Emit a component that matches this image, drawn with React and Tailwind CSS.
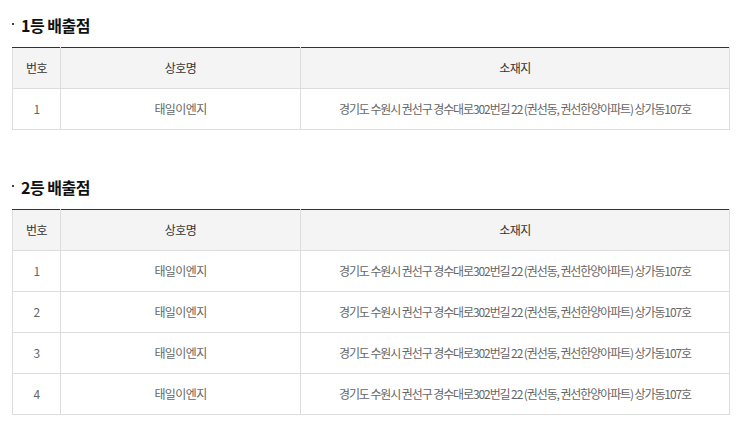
const rows1 = [1]
const rows2 = [1, 2, 3, 4]
const addr = '경기도 수원시 권선구 경수대로302번길 22 (권선동, 권선한양아파트) 상가동107호'

function StoreTable({ title, rows }) {
  return (
    <section>
      <h3 className="flex items-center gap-[7px] h-[26px] text-[16px] font-bold text-[#111] tracking-[-0.5px]">
        <span className="w-[2px] h-[2px] -mt-[2px] bg-[#444]" />
        {title}
      </h3>
      <table className="mt-[9px] w-full border-collapse table-fixed text-[12px] tracking-[-0.6px]">
        <colgroup>
          <col className="w-[48px]" />
          <col className="w-[240px]" />
          <col />
        </colgroup>
        <thead>
          <tr className="h-[41px] bg-[#f4f4f4] text-[#333]">
            <th className="p-0 font-normal border border-[#ddd] border-t-[#333]">번호</th>
            <th className="p-0 font-normal border border-[#ddd] border-t-[#333]">상호명</th>
            <th className="p-0 font-normal border border-[#ddd] border-t-[#333]">소재지</th>
          </tr>
        </thead>
        <tbody className="text-[#666]">
          {rows.map((n) => (
            <tr key={n} className="h-[41px]">
              <td className="p-0 text-center border border-[#ddd]">{n}</td>
              <td className="p-0 text-center border border-[#ddd]">태일이엔지</td>
              <td className="p-0 text-center border border-[#ddd] tracking-[-1.1px]">{addr}</td>
            </tr>
          ))}
        </tbody>
      </table>
    </section>
  )
}

export default function App() {
  return (
    <div className="w-[742px] h-[423px] bg-white px-[12px] pt-[12px] font-['Noto_Sans_CJK_KR',sans-serif] flex flex-col gap-[44px] overflow-hidden">
      <StoreTable title="1등 배출점" rows={rows1} />
      <StoreTable title="2등 배출점" rows={rows2} />
    </div>
  )
}
